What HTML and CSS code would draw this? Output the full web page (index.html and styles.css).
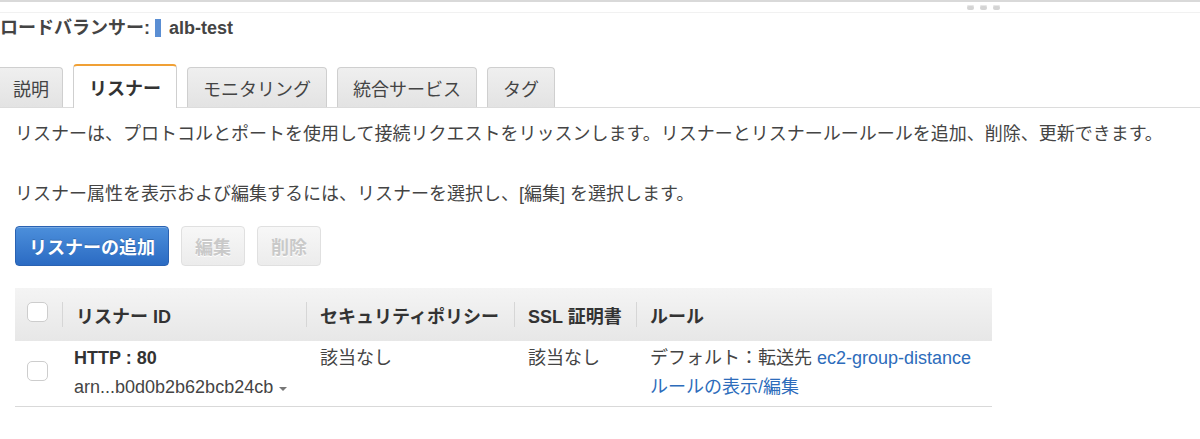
FILE: index.html
```html
<!DOCTYPE html>
<html lang="ja">
<head>
<meta charset="utf-8">
<link rel="stylesheet" href="styles.css">
</head>
<body>
<div class="topbar">
  <div class="grip"><span></span><span></span><span></span></div>
</div>
<h1 class="title">ロードバランサー:<span class="marker"></span>alb-test</h1>
<div class="tabs">
  <div class="tab first">説明</div>
  <div class="tab active">リスナー</div>
  <div class="tab">モニタリング</div>
  <div class="tab">統合サービス</div>
  <div class="tab">タグ</div>
</div>
<div class="content">
  <p class="desc first-desc">リスナーは、プロトコルとポートを使用して接続リクエストをリッスンします。リスナーとリスナールールールを追加、削除、更新できます。</p>
  <p class="desc second-desc">リスナー属性を表示および編集するには、リスナーを選択し、[編集] を選択します。</p>
  <div class="actions">
    <button class="btn primary">リスナーの追加</button>
    <button class="btn disabled">編集</button>
    <button class="btn disabled">削除</button>
  </div>
  <div class="grid">
    <div class="th check-col"><span class="checkbox head-check"></span></div>
    <div class="th sep">リスナー ID</div>
    <div class="th sep">セキュリティポリシー</div>
    <div class="th sep">SSL 証明書</div>
    <div class="th sep">ルール</div>

    <div class="td check-col"><span class="checkbox row-check"></span></div>
    <div class="td first-data">
      <div class="strong">HTTP : 80</div>
      <div class="arn">arn...b0d0b2b62bcb24cb<span class="caret"></span></div>
    </div>
    <div class="td">該当なし</div>
    <div class="td">該当なし</div>
    <div class="td">
      <div>デフォルト：転送先 <a class="link">ec2-group-distance</a></div>
      <div><a class="link">ルールの表示/編集</a></div>
    </div>
  </div>
</div>
</body>
</html>
```
FILE: styles.css
```css
html, body {
  margin: 0;
  padding: 0;
  background: #fff;
}
body {
  font-family: "Liberation Sans", "Noto Sans CJK JP", sans-serif;
  font-size: 18px;
  color: #444;
  width: 1200px;
  overflow: hidden;
}
.topbar {
  height: 10px;
  border-top: 2px solid #d9d9d9;
  border-bottom: 1px solid #f1f1f1;
  display: flex;
  justify-content: flex-end;
  align-items: center;
  padding-right: 200px;
}
.grip {
  display: flex;
  gap: 6px;
}
.grip span {
  width: 7px;
  height: 5px;
  border-radius: 2px;
  background: #d4d4d4;
  box-shadow: inset 0 1px 0 #e8e8e8;
}
.title {
  margin: 3px 0 0 0;
  font-size: 18px;
  line-height: 24px;
  font-weight: bold;
  color: #444;
  display: flex;
  align-items: center;
}
.marker {
  display: inline-block;
  width: 6px;
  height: 18px;
  background: #5a8ed3;
  margin: 0 8px 0 5px;
}
.tabs {
  margin-top: 24px;
  display: flex;
  align-items: flex-end;
  gap: 10px;
  border-bottom: 1px solid #dcdcdc;
}
.tab {
  box-sizing: border-box;
  height: 40px;
  padding: 0 15px;
  display: flex;
  align-items: center;
  border: 1px solid #cfcfcf;
  border-bottom: none;
  border-radius: 4px 4px 0 0;
  background: linear-gradient(#efefef, #e3e3e3);
  color: #444;
  white-space: nowrap;
}
.tab.first {
  margin-left: -5px;
  padding: 0 13px 0 17px;
}
.tab.active {
  height: 44px;
  margin-bottom: -1px;
  background: #fff;
  border-top: 2px solid #f0a035;
  font-weight: bold;
  color: #333;
}
.content {
  padding: 0 15px;
}
.desc {
  margin: 0;
  line-height: 24px;
  color: #444;
  white-space: nowrap;
}
.first-desc {
  margin-top: 14px;
}
.second-desc {
  margin-top: 36px;
}
.actions {
  margin-top: 20px;
  display: flex;
  gap: 12px;
}
.btn {
  box-sizing: border-box;
  height: 40px;
  padding: 0 13px;
  border-radius: 4px;
  font-family: inherit;
  font-size: 18px;
  font-weight: bold;
}
.btn.primary {
  color: #fff;
  background: linear-gradient(#4c8fdb, #2b6bc3);
  border: 1px solid #2a62b2;
  box-shadow: inset 0 1px 0 rgba(255,255,255,0.25);
  text-shadow: 0 -1px 0 rgba(0,0,0,0.2);
}
.btn.disabled {
  color: #c9c9c9;
  background: linear-gradient(#f7f7f7, #ececec);
  border: 1px solid #e0e0e0;
  text-shadow: 0 1px 0 #fff;
}
.grid {
  margin-top: 22px;
  width: 977px;
  display: grid;
  grid-template-columns: 47px 244px 208px 122px 356px;
}
.th {
  height: 53px;
  display: flex;
  align-items: center;
  padding-left: 14px;
  font-weight: bold;
  color: #333;
  background: linear-gradient(#f4f4f4, #e7e7e7);
  white-space: nowrap;
}
.th.sep {
  background:
    linear-gradient(#d6d6d6, #d6d6d6) left 14px / 1px 25px no-repeat,
    linear-gradient(#f4f4f4, #e7e7e7);
}
.check-col {
  padding-left: 12px;
  box-sizing: border-box;
}
.th.check-col {
  align-items: flex-start;
}
.checkbox {
  display: block;
  box-sizing: border-box;
  width: 21px;
  height: 20px;
  border: 1px solid #cdcdcd;
  border-radius: 5px;
  background: #fff;
}
.head-check {
  margin-top: 14px;
}
.td {
  padding: 3px 0 4px 14px;
  line-height: 29px;
  border-bottom: 1px solid #d9d9d9;
  color: #444;
  white-space: nowrap;
}
.td.first-data {
  padding-left: 12px;
}
.td.check-col {
  padding-left: 12px;
  padding-top: 20px;
}
.strong {
  font-weight: bold;
  color: #333;
}
.arn {
  display: flex;
  align-items: center;
}
.caret {
  display: inline-block;
  width: 0;
  height: 0;
  margin-left: 6px;
  margin-top: 3px;
  border-left: 4px solid transparent;
  border-right: 4px solid transparent;
  border-top: 4px solid #777;
}
.link {
  color: #2d6cbb;
  text-decoration: none;
}
```
